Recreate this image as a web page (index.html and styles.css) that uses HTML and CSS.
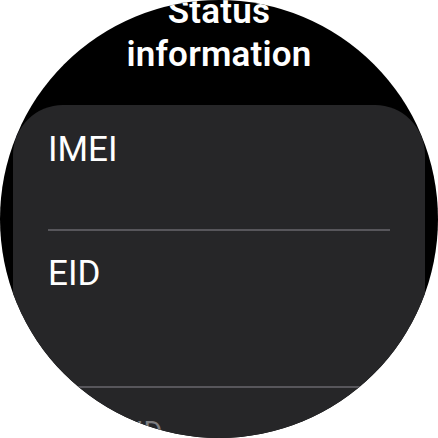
FILE: index.html
```html
<!DOCTYPE html>
<html lang="en">

<head>
    <meta charset="UTF-8">
    <meta name="viewport" content="width=device-width, initial-scale=1.0">
    <title>Status information</title>
    <link rel="stylesheet" href="styles.css">
</head>

<body>
    <div class="watch">

        <h1 class="titulo">Status<br>information</h1>

        <div class="tarjeta">
            <div class="fila fila-imei">
                <span class="etiqueta">IMEI</span>
            </div>
            <div class="separador"></div>
            <div class="fila fila-eid">
                <span class="etiqueta">EID</span>
            </div>
            <div class="separador"></div>
            <div class="fila fila-tenue">
                <span class="etiqueta">SIM ID</span>
            </div>
        </div>

    </div>
</body>

</html>
```

FILE: styles.css
```css
body {
    margin: 0;
    background-color: #ffffff;
    font-family: Roboto, "Noto Sans", sans-serif;
}

/* pantalla redonda del reloj */
.watch {
    width: 438px;
    height: 438px;
    border-radius: 50%;
    background-color: #000000;
    overflow: hidden;

    display: flex;
    flex-direction: column;
    align-items: center;
}

.titulo {
    margin: -10px 0 0 0;
    color: #ffffff;
    font-size: 35px;
    font-weight: 600;
    line-height: 43px;
    text-align: center;
    letter-spacing: 0.2px;
}

.tarjeta {
    margin-top: 29px;
    width: 412px;
    flex-shrink: 0;
    padding: 0 35px;
    box-sizing: border-box;
    background-color: #262628;
    border-radius: 50px 50px 0 0;
}

.fila {
    box-sizing: border-box;
}

.etiqueta {
    display: block;
    color: #ffffff;
    font-size: 35px;
    line-height: 42px;
}

.fila-imei {
    height: 124px;
    padding-top: 24px;
}

.fila-eid {
    height: 155px;
    padding-top: 22px;
}

/* la fila del borde inferior se encoge y se apaga */
.fila-tenue {
    height: 120px;
    padding-top: 34px;
    transform: scale(0.82);
    transform-origin: center top;
}

.fila-tenue .etiqueta {
    color: #7e7e81;
}

.separador {
    height: 2px;
    background-color: #57565b;
}
```
